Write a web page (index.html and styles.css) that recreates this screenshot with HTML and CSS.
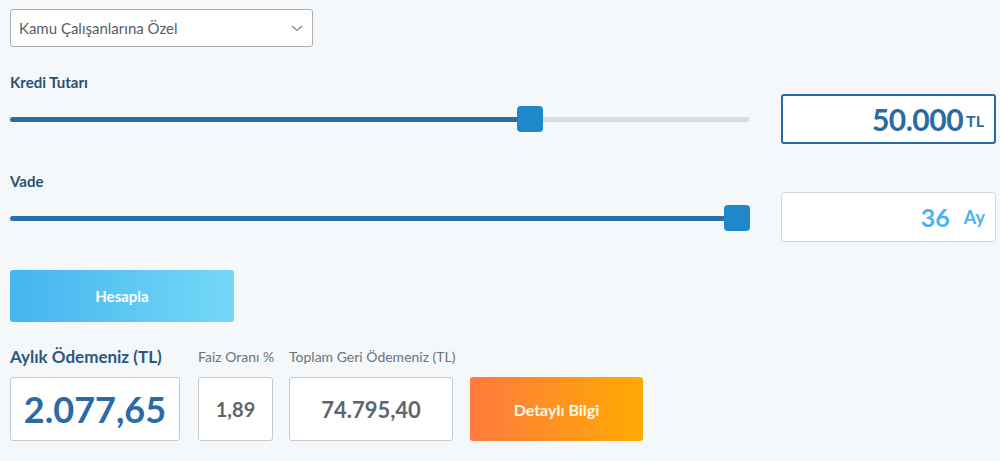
FILE: index.html
```html
<!DOCTYPE html>
<html lang="tr">

<head>
    <meta charset="UTF-8">
    <meta name="viewport" content="width=device-width, initial-scale=1.0">
    <title>Kredi Hesaplama</title>
    <link rel="stylesheet" href="styles.css">
</head>

<body>
    <div class="calc">
        <div class="select-box">
            <span class="select-text">Kamu Çalışanlarına Özel</span>
            <svg class="chevron" width="12" height="7" viewBox="0 0 12 7">
                <path d="M1 1 L6 5.5 L11 1" fill="none" stroke="#888" stroke-width="1.3" />
            </svg>
        </div>

        <div class="field-label">Kredi Tutarı</div>
        <div class="field-row">
            <div class="slider">
                <div class="track"></div>
                <div class="fill" style="width: 70.4%"></div>
                <div class="thumb" style="left: 507px"></div>
            </div>
            <div class="value-box amount">
                <span class="big">50.000</span><span class="unit">TL</span>
            </div>
        </div>

        <div class="field-label">Vade</div>
        <div class="field-row">
            <div class="slider">
                <div class="track"></div>
                <div class="fill" style="width: 100%"></div>
                <div class="thumb" style="left: 714px"></div>
            </div>
            <div class="value-box term">
                <span class="big">36</span><span class="unit">Ay</span>
            </div>
        </div>

        <div class="btn-calc">Hesapla</div>

        <div class="results">
            <div class="result monthly">
                <div class="result-label">Aylık Ödemeniz (TL)</div>
                <div class="result-box">2.077,65</div>
            </div>
            <div class="result rate">
                <div class="result-label">Faiz Oranı %</div>
                <div class="result-box">1,89</div>
            </div>
            <div class="result total">
                <div class="result-label">Toplam Geri Ödemeniz (TL)</div>
                <div class="result-box">74.795,40</div>
            </div>
            <div class="btn-detail">Detaylı Bilgi</div>
        </div>
    </div>
</body>

</html>
```

FILE: styles.css
```css
body {
    margin: 0;
    background-color: #f4f8fb;
    font-family: Lato, "Open Sans", sans-serif;
}

.calc {
    padding: 9px 4px 0 10px;
}

.select-box {
    width: 284px;
    height: 36px;
    border: 1px solid #a9aeb3;
    border-radius: 3px;
    background-color: #fff;
    display: flex;
    align-items: center;
    justify-content: space-between;
    padding: 0 9px 0 8px;
}

.select-text {
    font-size: 15px;
    color: #585e64;
}

.chevron {
    margin-top: 1px;
}

.field-label {
    font-size: 15px;
    font-weight: 700;
    color: #2c4f70;
    line-height: 20px;
    margin-top: 25px;
}

.field-label + .field-row {
    margin-top: 2px;
}

.field-row + .field-label {
    margin-top: 27px;
}

.field-row {
    display: flex;
    align-items: center;
    height: 50px;
}

.slider {
    position: relative;
    width: 739px;
    height: 5px;
}

.track {
    height: 5px;
    border-radius: 3px;
    background-color: #d6dde3;
}

.fill {
    position: absolute;
    top: 0;
    left: 0;
    height: 5px;
    border-radius: 3px 0 0 3px;
    background-color: #2a6ea8;
}

.thumb {
    position: absolute;
    top: -11px;
    width: 26px;
    height: 26px;
    border-radius: 4px;
    background-color: #1f88c8;
}

.value-box {
    margin-left: auto;
    width: 215px;
    height: 50px;
    box-sizing: border-box;
    background-color: #fff;
    border-radius: 3px;
    display: flex;
    align-items: center;
    justify-content: flex-end;
    padding-right: 10px;
    font-weight: 700;
}

.amount {
    border: 2px solid #2a6aa3;
    color: #2a6aa5;
}

.amount .big {
    font-size: 30px;
    letter-spacing: -0.5px;
}

.amount .unit {
    font-size: 16px;
    margin-left: 3px;
    margin-top: 2px;
}

.term {
    border: 1px solid #d3d9de;
    color: #4cb2ea;
    margin-top: -2px;
}

.term .big {
    font-size: 25px;
}

.term .unit {
    font-size: 18px;
    margin-left: 14px;
}

.btn-calc {
    margin-top: 27px;
    width: 224px;
    height: 52px;
    border-radius: 3px;
    background: linear-gradient(to right, #44b4ef, #74d8f8);
    color: #fff;
    font-size: 15px;
    font-weight: 700;
    display: flex;
    align-items: center;
    justify-content: center;
}

.results {
    display: flex;
    align-items: flex-end;
    margin-top: 24px;
}

.result {
    margin-right: 18px;
}

.result.rate {
    width: 75px;
    margin-right: 16px;
}

.result.total {
    width: 164px;
    margin-right: 17px;
}

.result-label {
    font-size: 14px;
    color: #6d7378;
    line-height: 22px;
    margin-bottom: 9px;
    white-space: nowrap;
}

.result-box {
    height: 64px;
    box-sizing: border-box;
    border: 1px solid #c3c9ce;
    border-radius: 3px;
    background-color: #fff;
    display: flex;
    align-items: center;
    justify-content: center;
    font-weight: 700;
    color: #5d666e;
}

.monthly .result-label {
    font-size: 17px;
    font-weight: 700;
    color: #2c5780;
}

.monthly .result-box {
    width: 170px;
    font-size: 36px;
    color: #2a6aa5;
}

.rate .result-box {
    font-size: 20px;
}

.total .result-box {
    font-size: 22px;
}

.btn-detail {
    width: 173px;
    height: 64px;
    border-radius: 3px;
    background: linear-gradient(to right, #ff7a3e, #ffab02);
    color: #fff8e8;
    font-size: 16px;
    font-weight: 700;
    display: flex;
    align-items: center;
    justify-content: center;
}
```
